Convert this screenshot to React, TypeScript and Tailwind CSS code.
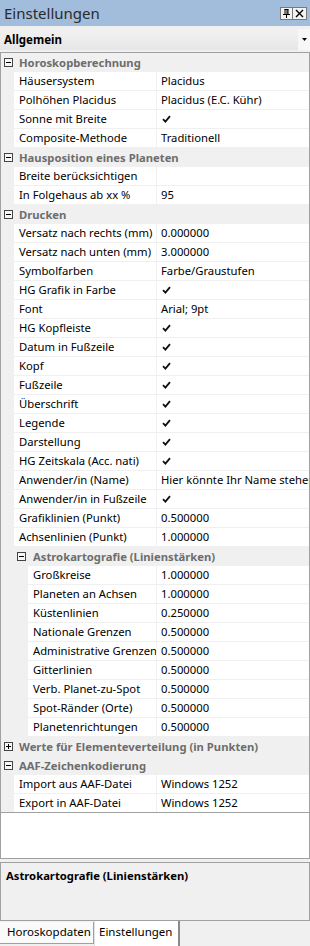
import React from "react";

type Row =
  | { kind: "cat"; label: string; open: boolean; level: number }
  | { kind: "prop"; name: string; value?: string; check?: boolean; level: number };

const rows: Row[] = [
  { kind: "cat", label: "Horoskopberechnung", open: true, level: 0 },
  { kind: "prop", name: "Häusersystem", value: "Placidus", level: 0 },
  { kind: "prop", name: "Polhöhen Placidus", value: "Placidus (E.C. Kühr)", level: 0 },
  { kind: "prop", name: "Sonne mit Breite", check: true, level: 0 },
  { kind: "prop", name: "Composite-Methode", value: "Traditionell", level: 0 },
  { kind: "cat", label: "Hausposition eines Planeten", open: true, level: 0 },
  { kind: "prop", name: "Breite berücksichtigen", value: "", level: 0 },
  { kind: "prop", name: "In Folgehaus ab xx %", value: "95", level: 0 },
  { kind: "cat", label: "Drucken", open: true, level: 0 },
  { kind: "prop", name: "Versatz nach rechts (mm)", value: "0.000000", level: 0 },
  { kind: "prop", name: "Versatz nach unten (mm)", value: "3.000000", level: 0 },
  { kind: "prop", name: "Symbolfarben", value: "Farbe/Graustufen", level: 0 },
  { kind: "prop", name: "HG Grafik in Farbe", check: true, level: 0 },
  { kind: "prop", name: "Font", value: "Arial; 9pt", level: 0 },
  { kind: "prop", name: "HG Kopfleiste", check: true, level: 0 },
  { kind: "prop", name: "Datum in Fußzeile", check: true, level: 0 },
  { kind: "prop", name: "Kopf", check: true, level: 0 },
  { kind: "prop", name: "Fußzeile", check: true, level: 0 },
  { kind: "prop", name: "Überschrift", check: true, level: 0 },
  { kind: "prop", name: "Legende", check: true, level: 0 },
  { kind: "prop", name: "Darstellung", check: true, level: 0 },
  { kind: "prop", name: "HG Zeitskala (Acc. nati)", check: true, level: 0 },
  { kind: "prop", name: "Anwender/in (Name)", value: "Hier könnte Ihr Name stehen", level: 0 },
  { kind: "prop", name: "Anwender/in in Fußzeile", check: true, level: 0 },
  { kind: "prop", name: "Grafiklinien (Punkt)", value: "0.500000", level: 0 },
  { kind: "prop", name: "Achsenlinien (Punkt)", value: "1.000000", level: 0 },
  { kind: "cat", label: "Astrokartografie (Linienstärken)", open: true, level: 1 },
  { kind: "prop", name: "Großkreise", value: "1.000000", level: 1 },
  { kind: "prop", name: "Planeten an Achsen", value: "1.000000", level: 1 },
  { kind: "prop", name: "Küstenlinien", value: "0.250000", level: 1 },
  { kind: "prop", name: "Nationale Grenzen", value: "0.500000", level: 1 },
  { kind: "prop", name: "Administrative Grenzen", value: "0.500000", level: 1 },
  { kind: "prop", name: "Gitterlinien", value: "0.500000", level: 1 },
  { kind: "prop", name: "Verb. Planet-zu-Spot", value: "0.500000", level: 1 },
  { kind: "prop", name: "Spot-Ränder (Orte)", value: "0.500000", level: 1 },
  { kind: "prop", name: "Planetenrichtungen", value: "0.500000", level: 1 },
  { kind: "cat", label: "Werte für Elementeverteilung (in Punkten)", open: false, level: 0 },
  { kind: "cat", label: "AAF-Zeichenkodierung", open: true, level: 0 },
  { kind: "prop", name: "Import aus AAF-Datei", value: "Windows 1252", level: 0 },
  { kind: "prop", name: "Export in AAF-Datei", value: "Windows 1252", level: 0 },
];

function ExpandBox({ open }: { open: boolean }) {
  return (
    <svg width="9" height="9" viewBox="0 0 9 9" className="block">
      <rect x="0.5" y="0.5" width="8" height="8" fill="#f7f7f7" stroke="#444" />
      <line x1="2" y1="4.5" x2="7" y2="4.5" stroke="#000" />
      {!open && <line x1="4.5" y1="2" x2="4.5" y2="7" stroke="#000" />}
    </svg>
  );
}

function Check() {
  return (
    <svg width="9" height="8" viewBox="0 0 9 8" className="block">
      <path d="M1 4.2 L3.4 6.6 L8 1.2" fill="none" stroke="#111" strokeWidth="1.8" />
    </svg>
  );
}

function GridRow({ row }: { row: Row }) {
  if (row.kind === "cat") {
    return (
      <div className="flex h-[19px] bg-[#f0f0f0]">
        {row.level === 1 && <div className="w-[13px] shrink-0 bg-[#f0f0f0]" />}
        <div className={`${row.level === 1 ? "w-[19px]" : "w-[18px]"} pl-[3px] shrink-0 flex items-center`}>
          <ExpandBox open={row.open} />
        </div>
        <div className="flex-1 font-bold text-[#6d6d6d] text-[11.25px] leading-[19px] whitespace-nowrap overflow-hidden">
          {row.label}
        </div>
      </div>
    );
  }
  return (
    <div className="flex h-[19px]">
      <div className={`${row.level === 1 ? "w-[27px]" : "w-[13px]"} shrink-0 bg-[#f0f0f0]`} />
      <div
        className={`${row.level === 1 ? "w-[129px]" : "w-[143px]"} shrink-0 border-r border-b border-[#f0f0f0] bg-white pl-[5px] text-[11.25px] leading-[18px] whitespace-nowrap overflow-hidden`}
      >
        {row.name}
      </div>
      <div className="flex-1 min-w-0 border-b border-[#f0f0f0] bg-white pl-[4px] text-[11.25px] leading-[18px] whitespace-nowrap overflow-hidden flex items-center">
        {row.check ? <span className="ml-[1px]"><Check /></span> : row.value}
      </div>
    </div>
  );
}

export default function App() {
  return (
    <div
      className="w-[310px] h-[946px] bg-[#f0f0f0] flex flex-col overflow-hidden text-black"
      style={{ fontFamily: '"Noto Sans", "Open Sans", sans-serif' }}
    >
      {/* Title bar */}
      <div className="h-[26px] shrink-0 bg-[#a2bcdb] flex items-center pl-[4px] pr-[3px]">
        <div className="flex-1 text-[15px] text-[#2a2a2a] leading-[26px]">Einstellungen</div>
        <div className="flex mt-[1px]">
          <div className="w-[13px] h-[13px] bg-[#f3f3f3] border border-[#7a7a7a] flex items-center justify-center">
            <svg width="9" height="9" viewBox="0 0 9 9">
              <path d="M2.5 0.5 H6.5 M3 0.5 V5 M6 0.5 V5 M5 1 V5 M1 5.5 H8 M4.5 5.5 V9" stroke="#000" fill="none" />
            </svg>
          </div>
          <div className="w-[14px] h-[13px] bg-[#f3f3f3] border border-[#7a7a7a] border-l-0 flex items-center justify-center">
            <svg width="9" height="9" viewBox="0 0 9 9">
              <path d="M1 1 L8 8 M8 1 L1 8" stroke="#000" strokeWidth="1.4" fill="none" />
            </svg>
          </div>
        </div>
      </div>

      {/* Combo */}
      <div className="h-[26px] shrink-0 pt-[3px] pb-[2px] flex">
        <div className="flex-1 h-[21px] bg-gradient-to-b from-[#f2f2f2] to-[#e6e6e6] flex items-center pl-[4px] font-bold text-[11.5px]">
          Allgemein
        </div>
        <div className="w-[12px] h-[21px] bg-[#f7f7f7] flex items-center justify-center">
          <svg width="5" height="3" viewBox="0 0 5 3">
            <path d="M0 0 H5 L2.5 3 Z" fill="#000" />
          </svg>
        </div>
      </div>

      {/* Property grid */}
      <div className="h-[807px] shrink-0 border border-[#a0a0a0] bg-white flex flex-col">
        {rows.map((r, i) => (
          <GridRow key={i} row={r} />
        ))}
        <div className="border-t border-[#a0a0a0] -mt-px" />
      </div>

      {/* Description */}
      <div className="h-[3px] shrink-0" />
      <div className="h-[59px] shrink-0 border border-[#a0a0a0] bg-[#f0f0f0] pl-[5px] pt-[4px]">
        <div className="font-bold text-[11.25px] leading-[18px]">Astrokartografie (Linienstärken)</div>
      </div>

      {/* Tabs */}
      <div className="flex-1 flex items-start">
        <div className="mt-[1px] h-[22px] w-[94px] bg-[#fafafa] border-b border-r border-[#a0a0a0] text-[11.5px] leading-[20px] pl-[7px]">
          Horoskopdaten
        </div>
        <div className="h-[25px] w-[86px] bg-white border-r-2 border-[#8a8a8a] border-l border-l-[#e0e0e0] text-[11.5px] leading-[22px] pl-[4px]">
          Einstellungen
        </div>
      </div>
    </div>
  );
}
